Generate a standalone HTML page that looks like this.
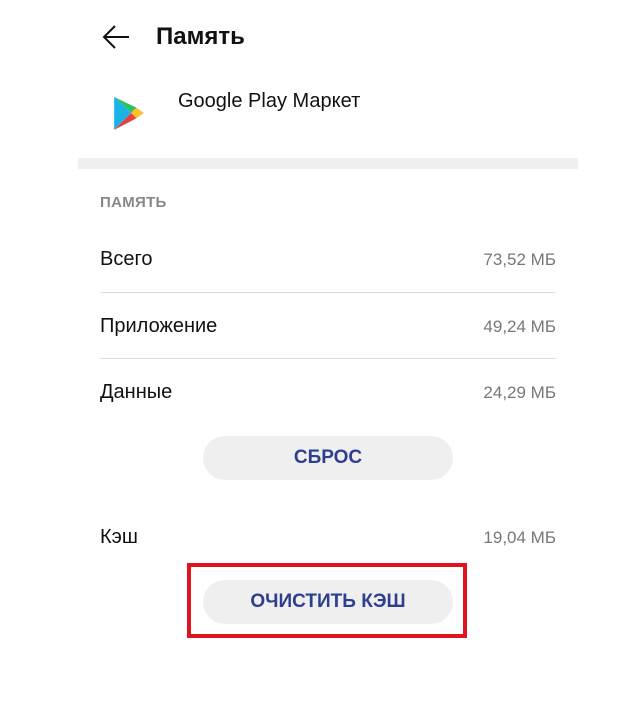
<!DOCTYPE html>
<html><head><meta charset="utf-8"><style>
body{margin:0;width:644px;height:707px;background:#fff;font-family:"Liberation Sans",sans-serif;position:relative;overflow:hidden}
.a{position:absolute;white-space:nowrap}
.row{position:absolute;left:100px;width:456px;font-size:20px;color:#111}
.row span{position:absolute;right:0;top:2px;font-size:17px;color:#777}
.line{position:absolute;left:100px;width:456px;height:1px;background:#ddd}
.btn{position:absolute;left:203px;width:250px;height:44px;border-radius:22px;background:#efefef;color:#2e3f8f;font-weight:bold;font-size:19px;text-align:center;line-height:44px}
</style></head><body>
<svg class="a" style="left:102px;top:24px" width="28" height="26" viewBox="0 0 28 26"><path d="M27 13H2M13 2L2 13l11 11" fill="none" stroke="#111" stroke-width="2"/></svg>
<div class="a" style="left:156px;top:23px;font-size:24px;font-weight:bold;color:#111">Память</div>
<svg class="a" style="left:113px;top:96px" width="32" height="35" viewBox="0 0 30 33"><path d="M1 1L17 16L1 32Z" fill="#1ab3e8"/><path d="M1 1L17 16L22 11Z" fill="#2fbf6a"/><path d="M1 32L17 16L22 21Z" fill="#e8403f"/><path d="M22 11L29 16L22 21L17 16Z" fill="#fbc02d"/></svg>
<div class="a" style="left:178px;top:90px;font-size:20px;color:#111">Google Play Маркет</div>
<div class="a" style="left:78px;top:158px;width:500px;height:11px;background:#f0f0f0"></div>
<div class="a" style="left:100px;top:194px;font-size:15px;color:#888;font-weight:bold;letter-spacing:.3px">ПАМЯТЬ</div>
<div class="row" style="top:248px">Всего<span>73,52 МБ</span></div>
<div class="line" style="top:292px"></div>
<div class="row" style="top:315px">Приложение<span>49,24 МБ</span></div>
<div class="line" style="top:358px"></div>
<div class="row" style="top:381px">Данные<span>24,29 МБ</span></div>
<div class="btn" style="top:436px">СБРОС</div>
<div class="row" style="top:526px">Кэш<span>19,04 МБ</span></div>
<div class="btn" style="top:580px">ОЧИСТИТЬ КЭШ</div>
<div class="a" style="left:187px;top:563px;width:272px;height:67px;border:4px solid #e0141e"></div>
</body></html>
